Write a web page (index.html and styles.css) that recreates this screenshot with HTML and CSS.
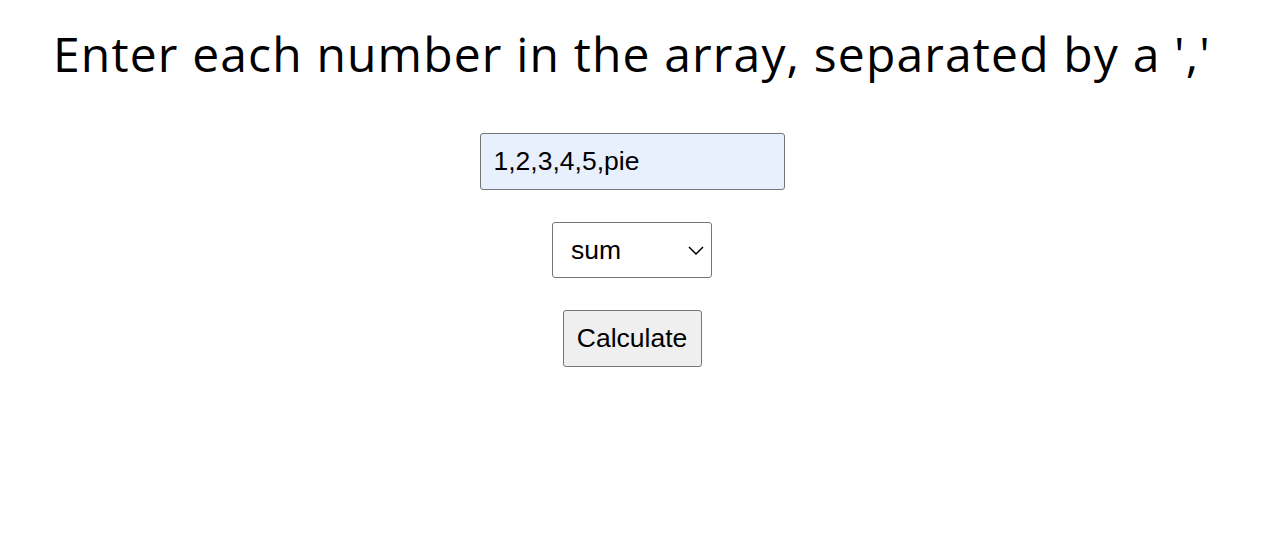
FILE: index.html
```html
<!DOCTYPE html>
<html>
<head>
<meta charset="utf-8">
<link rel="stylesheet" href="styles.css">
</head>
<body>
<main class="page">
  <h1 class="title">Enter each number in the array, separated by a ','</h1>
  <form class="form">
    <input class="field" type="text" value="1,2,3,4,5,pie">
    <div class="select-wrap">
      <select class="select">
        <option>sum</option>
        <option>average</option>
        <option>mode</option>
      </select>
      <svg class="chev" width="16" height="9" viewBox="0 0 16 9"><path d="M1 1l7 7 7-7" fill="none" stroke="#000" stroke-width="1.5"/></svg>
    </div>
    <button class="btn" type="button">Calculate</button>
  </form>
</main>
</body>
</html>
```
FILE: styles.css
```css
html, body { margin: 0; padding: 0; background: #fff; }
.page {
  display: flex;
  flex-direction: column;
  align-items: center;
  font-family: "Liberation Sans", Arial, sans-serif;
}
.title {
  font-family: "Open Sans", "Noto Sans", sans-serif;
  font-weight: 400;
  font-size: 48px;
  line-height: 56px;
  letter-spacing: 1.15px;
  margin: 26px 0 0 2px;
  color: #000;
  white-space: nowrap;
}
.form {
  display: flex;
  flex-direction: column;
  align-items: center;
  gap: 32px;
  margin-top: 51px;
  padding-left: 2px;
}
.field {
  box-sizing: border-box;
  width: 305px;
  height: 57px;
  padding: 0 13px;
  font-family: "Liberation Sans", Arial, sans-serif;
  font-size: 26.5px;
  color: #000;
  background: #e8f0fe;
  border: 1px solid #767676;
  border-radius: 3px;
  outline: none;
}
.select-wrap { position: relative; }
.select {
  box-sizing: border-box;
  width: 160px;
  height: 56px;
  padding: 0 0 0 18px;
  font-family: "Liberation Sans", Arial, sans-serif;
  font-size: 26.5px;
  color: #000;
  background: #fff;
  border: 1px solid #767676;
  border-radius: 3px;
  -webkit-appearance: none;
  appearance: none;
}
.chev { position: absolute; right: 8px; top: 24px; pointer-events: none; }
.btn {
  box-sizing: border-box;
  width: 139px;
  height: 57px;
  padding: 0;
  font-family: "Liberation Sans", Arial, sans-serif;
  font-size: 26.5px;
  color: #000;
  background: #efefef;
  border: 1px solid #767676;
  border-radius: 3px;
}
```
